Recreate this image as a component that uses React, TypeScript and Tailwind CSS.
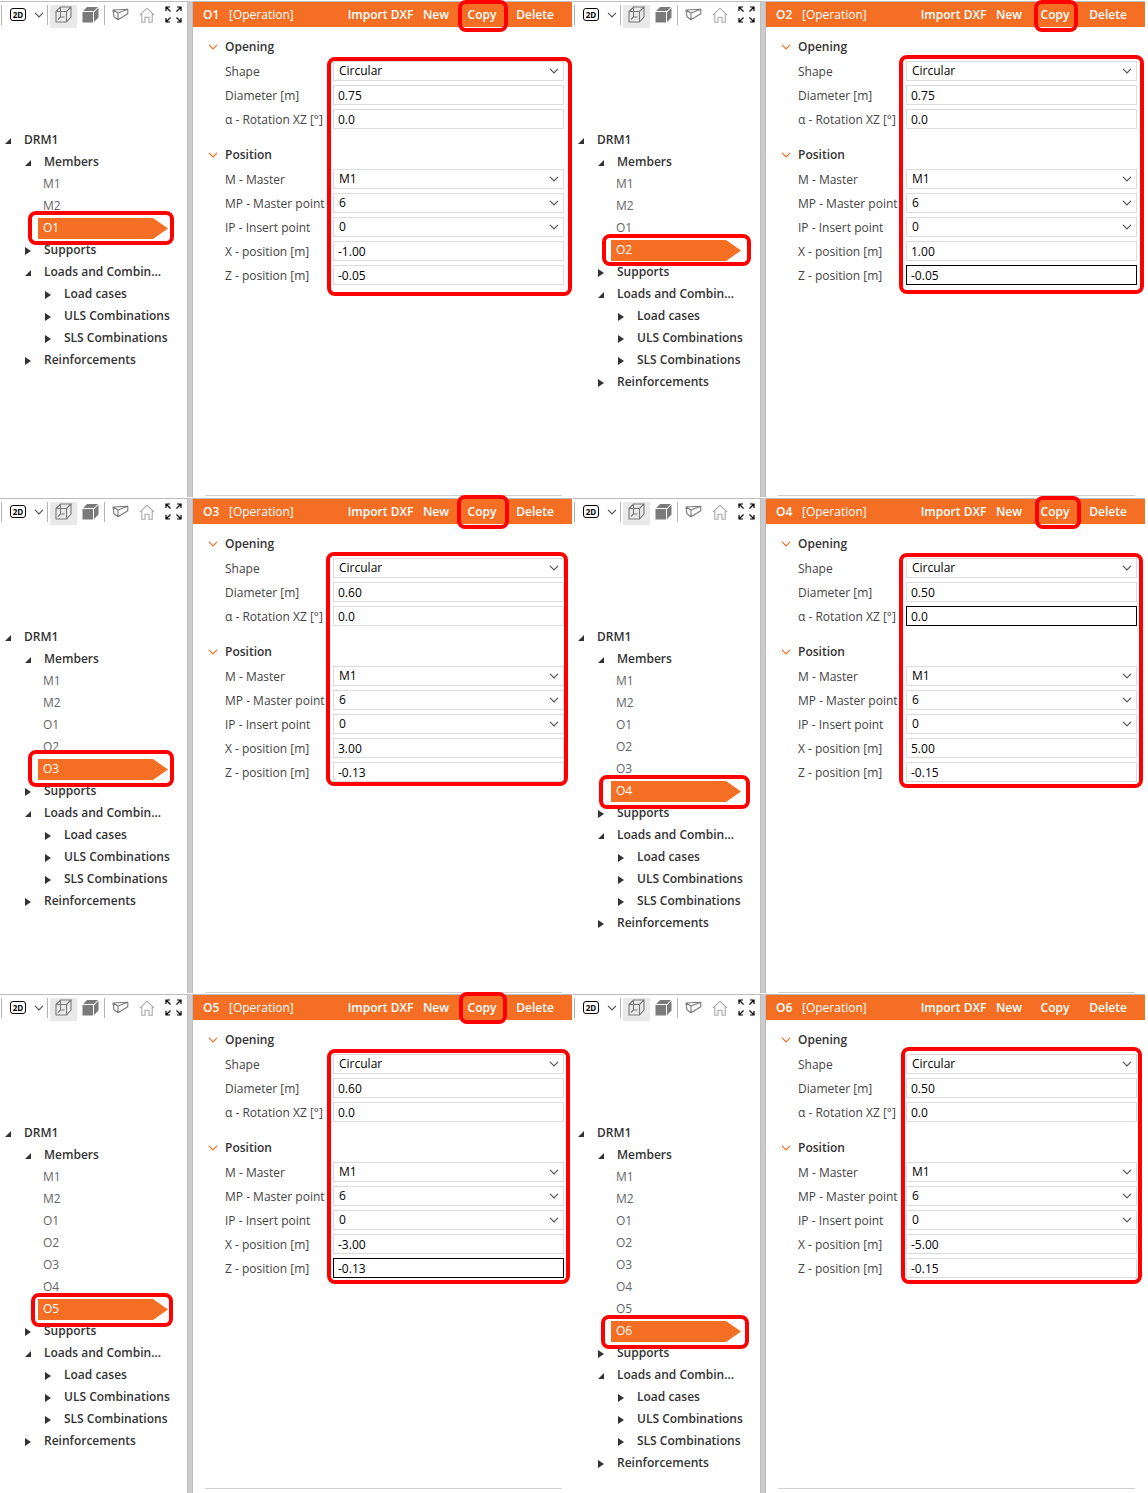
import { useId } from 'react';
import clsx from 'clsx';

type Operation = {
    name: string;
    diameter: string;
    x: string;
    z: string;
    members: string[];
    focused?: 'rotation' | 'z';
    treeMark: string;
    copyMark?: string;
    formMark: string;
};

const operations: Operation[] = [
    {
        name: 'O1', diameter: '0.75', x: '-1.00', z: '-0.05',
        members: ['M1', 'M2', 'O1'],
        treeMark: '-top-1.5 -bottom-1.5 left-7 right-[13px]',
        copyMark: '-top-0.5 -bottom-[5px] left-0 -right-0.5',
        formMark: '-top-0.5 -bottom-[9px] left-[134px] right-0',
    },
    {
        name: 'O2', diameter: '0.75', x: '1.00', z: '-0.05', focused: 'z',
        members: ['M1', 'M2', 'O1', 'O2'],
        treeMark: '-top-[5px] -bottom-[5px] left-[29px] right-[9px]',
        copyMark: '-top-0.5 -bottom-[5px] left-[3px] right-px',
        formMark: '-top-1 -bottom-[7px] left-[133px] right-px',
    },
    {
        name: 'O3', diameter: '0.60', x: '3.00', z: '-0.13',
        members: ['M1', 'M2', 'O1', 'O2', 'O3'],
        treeMark: '-top-2 -bottom-[7px] left-7 right-[13px]',
        copyMark: '-top-1 -bottom-[5px] -left-px -right-[3px]',
        formMark: '-top-1 -bottom-0.5 left-[133px] right-1',
    },
    {
        name: 'O4', diameter: '0.50', x: '5.00', z: '-0.15', focused: 'rotation',
        members: ['M1', 'M2', 'O1', 'O2', 'O3', 'O4'],
        treeMark: '-top-[5px] -bottom-[7px] left-[26px] right-2.5',
        copyMark: '-top-[3px] -bottom-[5px] left-1 -right-0.5',
        formMark: '-top-[3px] -bottom-1 left-[133px] right-0.5',
    },
    {
        name: 'O5', diameter: '0.60', x: '-3.00', z: '-0.13', focused: 'z',
        members: ['M1', 'M2', 'O1', 'O2', 'O3', 'O4', 'O5'],
        treeMark: '-top-[5px] -bottom-[7px] left-[31px] right-3.5',
        copyMark: '-top-[3px] -bottom-1 left-px -right-px',
        formMark: '-top-[3px] -bottom-1 left-[134px] right-0.5',
    },
    {
        name: 'O6', diameter: '0.50', x: '-5.00', z: '-0.15',
        members: ['M1', 'M2', 'O1', 'O2', 'O3', 'O4', 'O5', 'O6'],
        treeMark: '-top-[5px] -bottom-[7px] left-7 right-[11px]',
        formMark: '-top-[5px] -bottom-1 left-[135px] right-[3px]',
    },
];

// red callout drawn over the highlighted controls
function Mark({ className }: { className: string }) {
    return <span className={clsx('absolute z-10 border-4 border-[#ff0000] rounded-lg pointer-events-none', className)} />;
}

function Chevron({ className }: { className?: string }) {
    return (
        <svg width="10" height="6" viewBox="0 0 10 6" fill="none" stroke="currentColor" strokeWidth="1.2" className={className}>
            <path d="M1 0.8L5 4.8L9 0.8" />
        </svg>
    );
}

function Separator() {
    return <span className="w-px h-5 bg-[#b4b4b4]" />;
}

function Toolbar() {
    const button = 'flex items-center justify-center h-[23px] pb-1';
    return (
        <div className="flex items-start h-[26px] pt-[3px] pl-px text-[#7a7a7a]">
            <Separator />
            <button className={clsx(button, 'w-8')}>
                <span className="flex items-center justify-center w-4 h-[13px] border border-black rounded-[3px] text-black text-[8px] leading-none font-bold">2D</span>
            </button>
            <button aria-label="View options" className={clsx(button, 'w-2.5 mr-[3px] text-[#555]')}>
                <Chevron />
            </button>
            <Separator />
            <button aria-label="Wireframe" className={clsx(button, 'w-[27px] ml-0.5 bg-[#e9e9e9]')}>
                <svg width="17" height="17" viewBox="0 0 17 17" fill="none" stroke="currentColor" strokeWidth="1.1">
                    <path d="M1 5.5H11.5V16H1ZM1 5.5L5.5 1H16L11.5 5.5M16 1V11L11.5 16M5.5 1V11M5.5 11H9.5M5.5 11L3 13.5" />
                </svg>
            </button>
            <button aria-label="Solid" className={clsx(button, 'w-[27px]')}>
                <svg width="17" height="17" viewBox="0 0 17 17" fill="currentColor">
                    <path d="M0.5 6H11V16.5H0.5ZM1.2 5L5 1H16L12 5ZM12 6.2L16.5 1.7V11.5L12 16Z" />
                </svg>
            </button>
            <Separator />
            <button aria-label="Member view" className={clsx(button, 'w-[30px]')}>
                <svg width="17" height="13" viewBox="0 0 17 13" fill="none" stroke="currentColor" strokeWidth="1.1" strokeLinejoin="round">
                    <path d="M1 2L15.8 1.2V5.8L6 11.8L2 8.8ZM1 2L6 5L15.8 1.2M6 5V11.8" />
                </svg>
            </button>
            <button aria-label="Home" className={clsx(button, 'w-6 text-[#a8a8a8]')}>
                <svg width="16" height="16" viewBox="0 0 16 16" fill="none" stroke="currentColor" strokeWidth="1.1">
                    <path d="M0.8 8.2L8 1.2L15.2 8.2M2.8 7V15.2H6V10.2H10V15.2H13.2V7" />
                </svg>
            </button>
            <button aria-label="Zoom all" className={clsx(button, 'w-7 text-black')}>
                <svg width="17" height="17" viewBox="0 0 17 17" fill="none" stroke="currentColor" strokeWidth="1.2">
                    <path d="M1 5V1H5M1 1L5.5 5.5M12 1H16V5M16 1L11.5 5.5M1 12V16H5M1 16L5.5 11.5M16 12V16H12M16 16L11.5 11.5" />
                </svg>
            </button>
        </div>
    );
}

const indents = ['pl-1', 'pl-6', 'pl-11'];

function TreeNode({ label, level, open }: { label: string; level: number; open?: boolean }) {
    return (
        <li className={clsx('flex items-center gap-3 h-[22px] font-semibold whitespace-nowrap', indents[level])}>
            <svg width="8" height="8" viewBox="0 0 8 8" fill="currentColor" className="mt-0.5 shrink-0">
                <path d={open ? 'M7 1V7H1Z' : 'M1 0L7 4L1 8Z'} />
            </svg>
            {label}
        </li>
    );
}

function Tree({ op }: { op: Operation }) {
    return (
        <ul className="mt-[101px] text-[#333]">
            <TreeNode label="DRM1" level={0} open />
            <TreeNode label="Members" level={1} open />
            {op.members.map((member) => member === op.name ? (
                <li key={member} className="relative h-[22px] pt-px pl-[38px] pr-[19px]">
                    <div className="h-[21px] pl-[5px] leading-5 text-white bg-[#f46f24] [clip-path:polygon(0_0,calc(100%-15px)_0,100%_50%,calc(100%-15px)_100%,0_100%)]">
                        {member}
                    </div>
                    <Mark className={op.treeMark} />
                </li>
            ) : (
                <li key={member} className="h-[22px] pl-[43px] leading-[22px] text-[#666]">{member}</li>
            ))}
            <TreeNode label="Supports" level={1} />
            <TreeNode label="Loads and Combin..." level={1} open />
            <TreeNode label="Load cases" level={2} />
            <TreeNode label="ULS Combinations" level={2} />
            <TreeNode label="SLS Combinations" level={2} />
            <TreeNode label="Reinforcements" level={1} />
        </ul>
    );
}

function Field({ label, value, select, focused }: { label: string; value: string; select?: boolean; focused?: boolean }) {
    const id = useId();
    return (
        <div className="flex items-center h-6 pl-8 pr-2">
            <label htmlFor={id} className="w-[108px] shrink-0 pt-0.5 whitespace-nowrap text-[#444]">{label}</label>
            {select ? (
                <div className="relative flex-1 min-w-0">
                    <select id={id} defaultValue={value} className="block w-full h-5 pl-[5px] appearance-none border border-[#dcdcdc] bg-white text-black outline-none">
                        <option>{value}</option>
                    </select>
                    <Chevron className="absolute right-[5px] top-[7px] text-[#555] pointer-events-none" />
                </div>
            ) : (
                <input
                    id={id}
                    defaultValue={value}
                    className={clsx('flex-1 min-w-0 h-5 px-1 border bg-white text-black outline-none', focused ? 'border-black' : 'border-[#dcdcdc]')}
                />
            )}
        </div>
    );
}

function SectionTitle({ title }: { title: string }) {
    return (
        <h3 className="flex items-center gap-1 h-6 pl-3 font-semibold text-[#333]">
            <span className="flex justify-center w-4 text-[#f46f24]">
                <Chevron />
            </span>
            {title}
        </h3>
    );
}

function OperationPanel({ op }: { op: Operation }) {
    return (
        <section className="flex pt-px">
            <div className="w-[187px] shrink-0 border-t border-[#bdbdbd]">
                <Toolbar />
                <Tree op={op} />
            </div>
            <div className="w-1.5 shrink-0 border-x border-[#bdbdbd] bg-[#cbcbcb]" />
            <div className="flex-1 min-w-0 mr-px border-t border-[#bdbdbd]">
                <header className="flex items-center h-[25px] pl-2.5 pr-2 bg-[#f46f24] text-white">
                    <h2 className="w-[26px] font-semibold">{op.name}</h2>
                    <span className="mr-auto">[Operation]</span>
                    <button className="w-[67px] h-full font-semibold whitespace-nowrap">Import DXF</button>
                    <button className="w-11 h-full font-semibold">New</button>
                    <button className="relative w-12 h-full font-semibold">
                        Copy
                        {op.copyMark && <Mark className={op.copyMark} />}
                    </button>
                    <button className="w-[58px] h-full font-semibold">Delete</button>
                </header>
                <div className="h-[468px] pt-2">
                    <SectionTitle title="Opening" />
                    <div className="relative">
                        <Field label="Shape" value="Circular" select />
                        <Field label="Diameter [m]" value={op.diameter} />
                        <Field label="α - Rotation XZ [°]" value="0.0" focused={op.focused === 'rotation'} />
                        <div className="pt-3">
                            <SectionTitle title="Position" />
                        </div>
                        <Field label="M - Master" value="M1" select />
                        <Field label="MP - Master point" value="6" select />
                        <Field label="IP - Insert point" value="0" select />
                        <Field label="X - position [m]" value={op.x} />
                        <Field label="Z - position [m]" value={op.z} focused={op.focused === 'z'} />
                        <Mark className={op.formMark} />
                    </div>
                </div>
                <hr className="ml-3 mr-2.5 border-[#d0d0d0]" />
            </div>
        </section>
    );
}

export default function App() {
    return (
        <main className="grid grid-cols-2 grid-rows-[497px_496px_500px] pr-0.5 bg-white font-['Open_Sans','Noto_Sans',sans-serif] text-xs">
            {operations.map((op) => (
                <OperationPanel key={op.name} op={op} />
            ))}
        </main>
    );
}
